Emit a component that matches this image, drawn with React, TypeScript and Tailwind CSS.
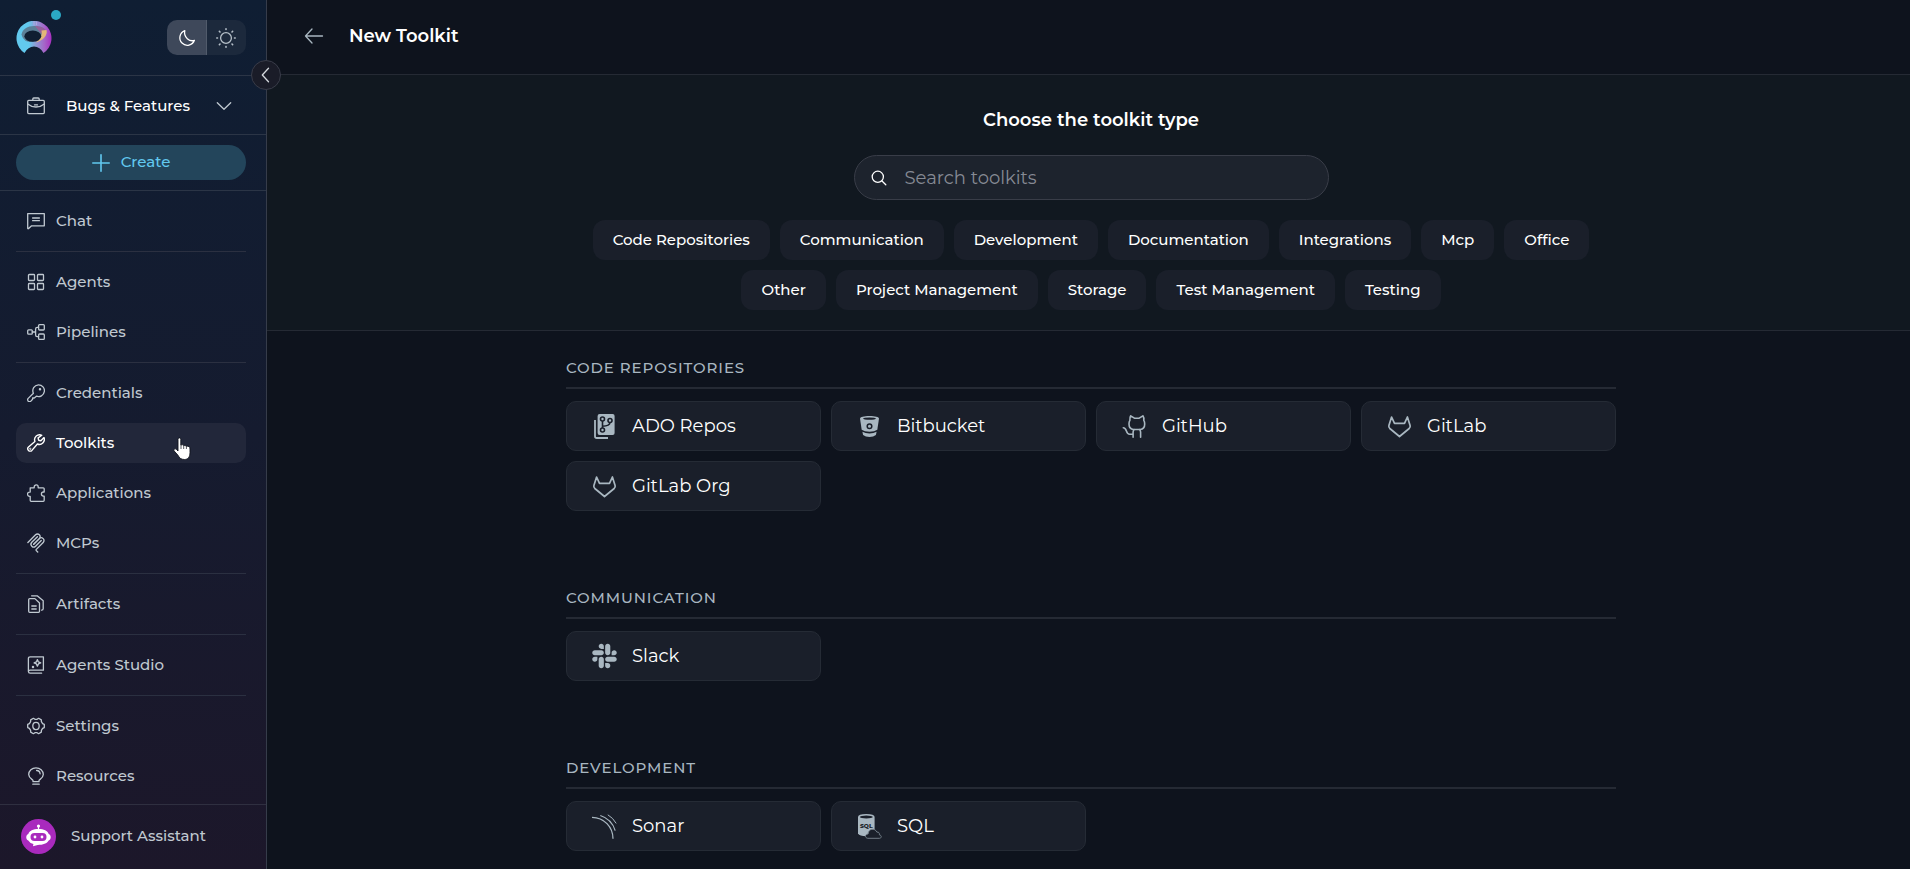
import type { ReactNode } from 'react';
import { FaSlack } from 'react-icons/fa';

const lineIcon = {
  viewBox: '0 0 18 18',
  fill: 'none',
  stroke: 'currentColor',
  strokeWidth: 1.3,
  strokeLinecap: 'round',
  strokeLinejoin: 'round',
  className: 'w-[18px] h-[18px] shrink-0',
  'aria-hidden': true,
} as const;

const ChatIcon = () => (
  <svg {...lineIcon}>
    <path d="M.7 1.600h16.600v12.200H4.600L1.600 16.600c-.4.3-.9.1-.9-.4z" />
    <path d="M5.600 6h6.800M5.600 8.700h6.800" />
  </svg>
);

const AgentsIcon = () => (
  <svg {...lineIcon}>
    <rect x="1.5" y="1.5" width="6" height="6" rx=".8" />
    <rect x="10.5" y="1.5" width="6" height="6" rx=".8" />
    <rect x="1.5" y="10.5" width="6" height="6" rx=".8" />
    <rect x="10.5" y="10.5" width="6" height="6" rx=".8" />
  </svg>
);

const PipelinesIcon = () => (
  <svg {...lineIcon}>
    <rect x=".7" y="6.9" width="4.6" height="4.2" rx=".9" />
    <rect x="11.6" y="1.6" width="5.7" height="5.4" rx=".9" />
    <rect x="11.6" y="11" width="5.7" height="5.4" rx=".9" />
    <path d="M5.200 9h3.400M11.600 4.300h-1.400q-1.600 0-1.600 1.600v6.200q0 1.600 1.600 1.600h1.400" />
  </svg>
);

const KeyIcon = () => (
  <svg {...lineIcon}>
    <path d="M11.4.8a5.900 5.900 0 1 1-2 11.400L7.300 14H5.600v1.300l-1.700 1.800a1.800 1.800 0 0 1-2.900-.3c-.5-.8-.4-1.800.2-2.400l5.200-5.200A5.900 5.900 0 0 1 11.4.8z" />
    <circle cx="13" cy="5.2" r=".6" fill="currentColor" />
  </svg>
);

const WrenchIcon = () => (
  <svg {...lineIcon} strokeWidth={1.4}>
    <path d="M14.800 1.300a5 5 0 0 0-6.900 6.200L1.500 13a2.300 2.300 0 1 0 3.400 3.400l5.500-6.400a5 5 0 0 0 6.600-6.400l-3.100 3.100-2.300-.5-.5-2.300z" />
    <circle cx="3.3" cy="14.7" r=".3" />
  </svg>
);

const PuzzleIcon = () => (
  <svg {...lineIcon}>
    <path d="M3.200 3.800h4V2.900a2 2 0 0 1 4 0v.9h5q1 0 1 1V8h-.7a2 2 0 0 0 0 4.200h.7v4.100q0 1-1 1h-12q-1 0-1-1v-4h-.6a2 2 0 0 1 0-4.200h.6z" />
  </svg>
);

const McpIcon = () => (
  <svg {...lineIcon} viewBox="10 4 160 172" strokeWidth={12} className="w-[18px] h-5 shrink-0">
    <path d="M18 84.8528L85.8822 16.9706C95.2548 7.59798 110.451 7.59798 119.823 16.9706C129.196 26.3431 129.196 41.5391 119.823 50.9117L68.5581 102.177" />
    <path d="M69.2652 101.47L119.823 50.9117C129.196 41.5391 144.392 41.5391 153.765 50.9117L154.118 51.2652C163.491 60.6378 163.491 75.8338 154.118 85.2063L92.7248 146.6C89.6006 149.724 89.6006 154.789 92.7248 157.913L105.331 170.52" />
    <path d="M102.853 33.9411L52.6482 84.1457C43.2756 93.5183 43.2756 108.714 52.6482 118.087C62.0208 127.459 77.2167 127.459 86.5893 118.087L136.794 67.8822" />
  </svg>
);

const ArtifactsIcon = () => (
  <svg {...lineIcon}>
    <path d="M1.700 4.600q0-1 1-1h5.200l4.600 4.400v8.300q0 1-1 1H2.700q-1 0-1-1z" />
    <path d="M4.600.8h5.600l6 5v8q0 1.400-1.600 1.400M4.800 11h4.400M4.800 14h4.400" />
  </svg>
);

const StudioIcon = () => (
  <svg {...lineIcon}>
    <path d="M16.4.8H3.200q-1.800 0-1.800 1.800v12.800q0 1.800 1.800 1.800h11.400M16.4.8v13.400H3.200q-1.800 0-1.800 1.300" />
    <path d="M10.400 3.600l1 2.300 2.300 1-2.300 1-1 2.300-1-2.300-2.300-1 2.300-1z" />
    <circle cx="6" cy="11" r=".6" fill="currentColor" />
  </svg>
);

const GearIcon = () => (
  <svg {...lineIcon}>
    <path d="M6.400 1.300l1.500 1h2.200l1.500-1 2.700 1.600.1 1.800 1.200 1.900 1.700.8v3.200l-1.700.8-1.200 1.900-.1 1.800-2.700 1.600-1.500-1H7.900l-1.500 1-2.700-1.600-.1-1.800-1.200-1.900-1.700-.8V7.400l1.700-.8 1.200-1.900.1-1.800z" />
    <ellipse cx="9" cy="9" rx="3.2" ry="3.6" />
  </svg>
);

const BulbIcon = () => (
  <svg {...lineIcon}>
    <path d="M6 14.700v-1.200C6 12.600 1.700 11.200 1.700 7.600 1.700 3.800 5 .8 9 .8s7.300 3 7.300 6.800c0 3.600-4.300 5-4.300 5.900v1.200zM5.800 17.200h6.400" />
    <path d="M9.600 3.500a3.600 3.600 0 0 1 3.500 3.300" />
  </svg>
);

const BriefcaseIcon = () => (
  <svg {...lineIcon}>
    <rect x=".7" y="3.4" width="16.6" height="13.2" rx="1" />
    <path d="M5.800 3.400V2q0-1 1-1h4.400q1 0 1 1v1.400M.7 7q3.600 3 8.300 3t8.300-3M7.500 7.900h3" />
  </svg>
);

const navGroups = [
  [{ label: 'Chat', icon: ChatIcon }],
  [
    { label: 'Agents', icon: AgentsIcon },
    { label: 'Pipelines', icon: PipelinesIcon },
  ],
  [
    { label: 'Credentials', icon: KeyIcon },
    { label: 'Toolkits', icon: WrenchIcon, active: true },
    { label: 'Applications', icon: PuzzleIcon },
    { label: 'MCPs', icon: McpIcon },
  ],
  [{ label: 'Artifacts', icon: ArtifactsIcon }],
  [{ label: 'Agents Studio', icon: StudioIcon }],
  [
    { label: 'Settings', icon: GearIcon },
    { label: 'Resources', icon: BulbIcon },
  ],
];

const categories = [
  'Code Repositories',
  'Communication',
  'Development',
  'Documentation',
  'Integrations',
  'Mcp',
  'Office',
  'Other',
  'Project Management',
  'Storage',
  'Test Management',
  'Testing',
];

const AdoIcon = () => (
  <svg viewBox="0 0 25 25" className="w-[25px] h-[25px]" aria-hidden="true">
    <path d="M3 6v16.200q0 1.800 1.800 1.800H16" fill="none" stroke="#a9b7c1" strokeWidth="1.8" />
    <rect x="5.6" y="0" width="17" height="21" rx="2" fill="#a9b7c1" />
    <g fill="none" stroke="#1a1f2a" strokeWidth="1.6">
      <circle cx="10.5" cy="5" r="2" />
      <circle cx="10.5" cy="16" r="2" />
      <circle cx="18" cy="6.5" r="2" />
      <path d="M10.500 7v7M18 8.500q-.4 3.600-7.500 3.700" />
    </g>
  </svg>
);

const BitbucketIcon = () => (
  <svg viewBox="0 0 25 25" className="w-[25px] h-[25px]" aria-hidden="true">
    <path d="M3 4.500C3 3 7 2 12.500 2S22 3 22 4.500l-1.700 11.200q-2.700 2-7.800 2t-7.800-2z" fill="#a9b7c1" />
    <path d="M5.400 17.800q3 1.700 7.100 1.700t7.100-1.700l-.7 3.200q-2.400 2-6.400 2t-6.400-2z" fill="#a9b7c1" />
    <ellipse cx="12.5" cy="4.6" rx="6.5" ry="1.2" fill="#1a1f2a" />
    <circle cx="12.5" cy="12.3" r="2.3" fill="none" stroke="#1a1f2a" strokeWidth="1.5" />
  </svg>
);

const GithubIcon = () => (
  <svg viewBox="-2 0 25 25" className="w-[25px] h-[25px]" fill="none" stroke="#a9b7c1" strokeWidth="1.6" strokeLinecap="round" strokeLinejoin="round" aria-hidden="true">
    <path d="M6.700 1.800l3.700 2.400h4.800l3.700-2.400q1.200 1.700.9 4.600.9 1.300.9 3.600 0 5-4.500 5.500H9.600Q5 15 5 10q0-2.300.9-3.600-.3-2.900.8-4.600z" />
    <path d="M10.100 15.500q-1 1-1 2.800v5M15.600 15.500q1 1 1 2.800v5M-.7 13.700c4 0 2.200 6.500 6.300 6.500h3.400" />
  </svg>
);

const GitlabIcon = () => (
  <svg viewBox="0 0 25 25" className="w-[25px] h-[25px]" fill="none" stroke="#a9b7c1" strokeWidth="1.7" strokeLinejoin="round" aria-hidden="true">
    <path d="M4.600 3L7.500 9.300h10L20.400 3l2.700 8.600q.5 1.600-.9 2.900l-9.700 8-9.700-8q-1.400-1.300-.9-2.900z" />
  </svg>
);

const SlackIcon = () => <FaSlack className="w-[25px] h-7 text-[#a9b7c1]" aria-hidden="true" />;

const SonarIcon = () => (
  <svg viewBox="0 0 25 25" className="w-[25px] h-[25px]" fill="none" stroke="#a9b7c1" aria-hidden="true">
    <path d="M0 3.300C12 3.300 21 13 21 24.800" strokeWidth="1.3" />
    <path d="M8.300 1.500C15.500 3.800 21 9.300 23.200 16.600" strokeWidth="1.2" />
    <path d="M15.800.8q5.200 3 8.400 8.600" strokeWidth="1" />
  </svg>
);

const SqlIcon = () => (
  <svg viewBox="0 0 25 25" className="w-[25px] h-[25px]" aria-hidden="true">
    <path d="M1 3q0-3 8.300-3t8.300 3v16.500q-1.500 2.800-8.300 2.800T1 19.500z" fill="#a9b7c1" />
    <ellipse cx="9.3" cy="3" rx="6.5" ry="1.5" fill="#1a1f2a" />
    <text x="9.3" y="14" textAnchor="middle" fontSize="6" fontWeight="800" fill="#1a1f2a">SQL</text>
    <path d="M10.800 24.300c-3.200-.3-3-4.200.3-4.400.1-5.300 6.800-6.300 8.800-1.800 2.200-.2 2.700 1.200 2.500 2.700 2.600.6 2.300 3.400.1 3.500z" fill="#1a1f2a" stroke="#7b8791" strokeWidth=".9" />
  </svg>
);

const sections = [
  {
    title: 'Code Repositories',
    tools: [
      { label: 'ADO Repos', icon: AdoIcon },
      { label: 'Bitbucket', icon: BitbucketIcon },
      { label: 'GitHub', icon: GithubIcon },
      { label: 'GitLab', icon: GitlabIcon },
      { label: 'GitLab Org', icon: GitlabIcon },
    ],
  },
  {
    title: 'Communication',
    tools: [{ label: 'Slack', icon: SlackIcon }],
  },
  {
    title: 'Development',
    tools: [
      { label: 'Sonar', icon: SonarIcon },
      { label: 'SQL', icon: SqlIcon },
    ],
  },
];

function Logo() {
  return (
    <svg viewBox="0 0 36 33" className="w-9 h-[33px]" aria-label="Home">
      <defs>
        <linearGradient id="ring" x1="0" x2="1">
          <stop offset=".35" stopColor="#62c9ee" />
          <stop offset=".55" stopColor="#8f9bd4" />
          <stop offset=".8" stopColor="#a564c8" />
          <stop offset="1" stopColor="#a92fc0" />
        </linearGradient>
      </defs>
      <path d="M8.500 32A17.500 17.500 0 1 1 27.500 32Q24 25.500 18 25.500T8.500 32z" fill="url(#ring)" />
      <path d="M5.500 13.500C6.500 8 11.500 5 18 5s11 2 12.500 6L17 21l-6-.5q-4.500-2.500-5.500-7z" fill="#5c8098" />
      <path d="M19 5c5 0 10.500 2 12 6l-6 1.500z" fill="#96609a" />
      <path d="M25.500 9.500l5-.5c1.500 5-3.500 11-11 12.500 5-3.500 7-7.500 6-12z" fill="#e3b778" />
      <ellipse cx="16.8" cy="15.2" rx="8.4" ry="5.6" fill="#101e32" />
      <path d="M18 0v4.500M20.500 1v3" stroke="#b9a5e2" strokeWidth=".8" />
    </svg>
  );
}

function HandCursor() {
  return (
    <svg viewBox="0 0 18 24" className="absolute left-[157px] top-[14px] w-[18px] h-6 pointer-events-none" aria-hidden="true">
      <path
        d="M5 2.300C5 .4 7.800.4 7.800 2.300V8q1.700-1 2.700.5 1.800-.8 2.600.8 3.900-.8 3.900 2.700v3.500c0 4.500-2 7-5.500 7-3.700 0-5-1.500-6.500-4.200L1 13.800c-.7-1.500 1-2.700 2.300-1.500L5 14z"
        fill="#fff"
        stroke="#10131c"
        strokeWidth=".9"
      />
      <path d="M8 8v4M10.700 9v3M13.400 9.600V12" stroke="#10131c" strokeWidth=".7" />
    </svg>
  );
}

function NavItem({ label, icon, active }: { label: string; icon: ReactNode; active?: boolean }) {
  return (
    <li className="relative">
      <a
        href="#"
        aria-current={active ? 'page' : undefined}
        className={`flex h-10 items-center gap-[11px] rounded-[10px] px-[11px] text-[15px] font-medium ${
          active ? 'bg-[#22273a] text-white' : 'text-[#c0c9d1]'
        }`}
      >
        {icon}
        {label}
      </a>
      {active && <HandCursor />}
    </li>
  );
}

function Sidebar() {
  return (
    <aside className="relative flex w-[267px] shrink-0 flex-col border-r border-[#363c4a] bg-linear-to-b from-[#0f1e33] via-[#151b2f] to-[#1c172a]">
      <div className="flex h-[76px] shrink-0 items-start justify-between border-b border-[#2b3546] pl-4 pr-5 pt-5">
        <a href="#" className="relative pt-px">
          <Logo />
          <span className="absolute -top-2.5 left-[35px] h-2.5 w-2.5 rounded-full bg-[#2ba9c5]"></span>
        </a>
        <div className="flex h-[35px] overflow-hidden rounded-[10px]">
          <button aria-label="Dark theme" className="flex w-10 items-center justify-center border-r border-[#515b6b] bg-[#3e485a] text-white">
            <svg {...lineIcon}>
              <path d="M6.800 1.700A7.500 7.500 0 1 0 16.400 11.300C11.800 13 5.300 8.500 6.800 1.700z" />
            </svg>
          </button>
          <button aria-label="Light theme" className="flex w-[39px] items-center justify-center bg-[#1c293c] pr-0.5 text-[#b5bfc8]">
            <svg {...lineIcon} viewBox="0 0 20 20" className="h-5 w-5">
              <circle cx="10" cy="10" r="5.4" />
              <path d="M10 .8v.7M10 18.500v.7M.8 10h.7M18.500 10h.7M3.400 3.400l.6.6M16 16l.6.6M3.400 16.600l.6-.6M16 4l.6-.6" strokeWidth="1.6" />
            </svg>
          </button>
        </div>
      </div>

      <button
        aria-label="Collapse sidebar"
        className="absolute -right-[15px] top-[60px] z-10 flex h-[30px] w-[30px] items-center justify-center rounded-full border border-[#393c49] bg-[#1a1c28] text-[#d5d9de]"
      >
        <svg {...lineIcon}>
          <path d="M11.500 2.200L5.300 9l6.200 6.800" />
        </svg>
      </button>

      <button className="flex h-[59px] shrink-0 items-center border-b border-[#2b3546] pl-[27px] pr-[33px] pt-0.5 text-[15px] font-medium text-white">
        <span className="text-[#c0c9d1]">
          <BriefcaseIcon />
        </span>
        <span className="ml-[21px] flex-1 text-left">Bugs &amp; Features</span>
        <svg {...lineIcon} className="h-[18px] w-[18px] text-[#c0c9d1]">
          <path d="M2.300 5.700L9 12.300l6.700-6.600" />
        </svg>
      </button>

      <div className="shrink-0 border-b border-[#2b3546] pb-2.5 pl-4 pr-5 pt-2.5">
        <button className="flex h-[35px] w-full items-center justify-center gap-[11px] rounded-full bg-[#23455b] text-[15px] font-medium text-[#62c9f0]">
          <svg {...lineIcon} strokeWidth={1.6}>
            <path d="M9 .8v16.400M.8 9h16.400" />
          </svg>
          Create
        </button>
      </div>

      <nav className="min-h-0 flex-1 pl-4 pr-5 pt-2.5">
        {navGroups.map((group, index) => (
          <ul
            key={group[0].label}
            className={`flex flex-col gap-2.5 ${index > 0 ? 'mt-2.5 border-t border-[#2b3041] pt-2.5' : ''}`}
          >
            {group.map((item) => {
              const Icon = item.icon;
              return <NavItem key={item.label} label={item.label} icon={<Icon />} active={'active' in item} />;
            })}
          </ul>
        ))}
      </nav>

      <button className="flex h-[65px] shrink-0 items-center gap-[15px] border-t border-[#2f2f40] pb-0.5 pl-[21px] text-[15px] font-medium text-[#c0c9d1]">
        <svg viewBox="0 0 35 35" className="h-[35px] w-[35px]" aria-hidden="true">
          <circle cx="17.5" cy="17.5" r="17.5" fill="#a92abd" />
          <circle cx="17.5" cy="7" r="1.6" fill="#fff" />
          <path d="M17.500 7v4" stroke="#fff" strokeWidth="1.2" />
          <path d="M17.500 10c5.500 0 9 1.500 10.200 5 2.700.8 2.700 5.700 0 6.500-1.700 3-5.500 4.400-11 4.400L12 27.300l.4-2.300q-3.800-1-5.100-3.500c-2.700-.8-2.700-5.700 0-6.500C8.500 11.500 12 10 17.500 10z" fill="#fff" />
          <rect x="9.5" y="14" width="16" height="8" rx="4" fill="#a92abd" />
          <circle cx="14" cy="18" r="1.4" fill="#fff" />
          <circle cx="21" cy="18" r="1.4" fill="#fff" />
        </svg>
        Support Assistant
      </button>
    </aside>
  );
}

export default function App() {
  return (
    <div className="flex h-screen overflow-hidden bg-[#0e131d] font-['Montserrat','Inter',sans-serif] text-white">
      <Sidebar />
      <main className="flex min-w-0 flex-1 flex-col">
        <header className="flex h-[75px] shrink-0 items-center gap-[25px] border-b border-[#252a34] pb-0.5 pl-[37px]">
          <button aria-label="Back" className="text-[#a9b7c1]">
            <svg {...lineIcon} viewBox="0 0 20 20" className="h-5 w-5">
              <path d="M18.500 10H1.500M8 3L1.500 10 8 17" />
            </svg>
          </button>
          <h1 className="text-lg font-semibold">New Toolkit</h1>
        </header>

        <section className="flex shrink-0 flex-col items-center border-b border-[#252a34] bg-[#111820] pb-5 pl-[5px] pt-[33px]">
          <h2 className="text-lg leading-6 font-semibold">Choose the toolkit type</h2>
          <label className="mt-[23px] flex h-[45px] w-full max-w-[475px] items-center rounded-full border border-[#393d48] bg-[#1d232d] px-4">
            <svg {...lineIcon} viewBox="0 0 16 16" className="h-4 w-4 shrink-0">
              <circle cx="6.8" cy="6.8" r="5.6" />
              <path d="M11 11l3.800 3.800" />
            </svg>
            <input
              type="text"
              aria-label="Search toolkits"
              placeholder="Search toolkits"
              className="ml-[18px] min-w-0 flex-1 bg-transparent text-lg outline-none placeholder:text-[#868a94]"
            />
          </label>
          <div className="mt-5 flex w-full max-w-[1050px] flex-wrap justify-center gap-2.5">
            {categories.map((category) => (
              <button
                key={category}
                className="h-10 rounded-xl bg-[#1a1f2a] px-5 text-[15px] font-medium whitespace-nowrap"
              >
                {category}
              </button>
            ))}
          </div>
        </section>

        <div className="flex min-h-0 flex-1 flex-col items-center gap-[77px] overflow-y-auto pl-[5px] pt-[27px]">
          {sections.map((section) => (
            <section key={section.title} className="w-full max-w-[1050px]">
              <h3 className="border-b-2 border-[#252a34] pb-[9px] text-[15px] leading-5 font-medium tracking-[0.06em] text-[#a9b7c1] uppercase">
                {section.title}
              </h3>
              <div className="mt-3 grid grid-cols-4 gap-2.5">
                {section.tools.map((tool) => {
                  const Icon = tool.icon;
                  return (
                    <button
                      key={tool.label}
                      className="flex h-[50px] items-center gap-[15px] rounded-[10px] border border-[#252b35] bg-[#1a1f2a] px-[25px] text-lg"
                    >
                      <Icon />
                      {tool.label}
                    </button>
                  );
                })}
              </div>
            </section>
          ))}
        </div>
      </main>
    </div>
  );
}
